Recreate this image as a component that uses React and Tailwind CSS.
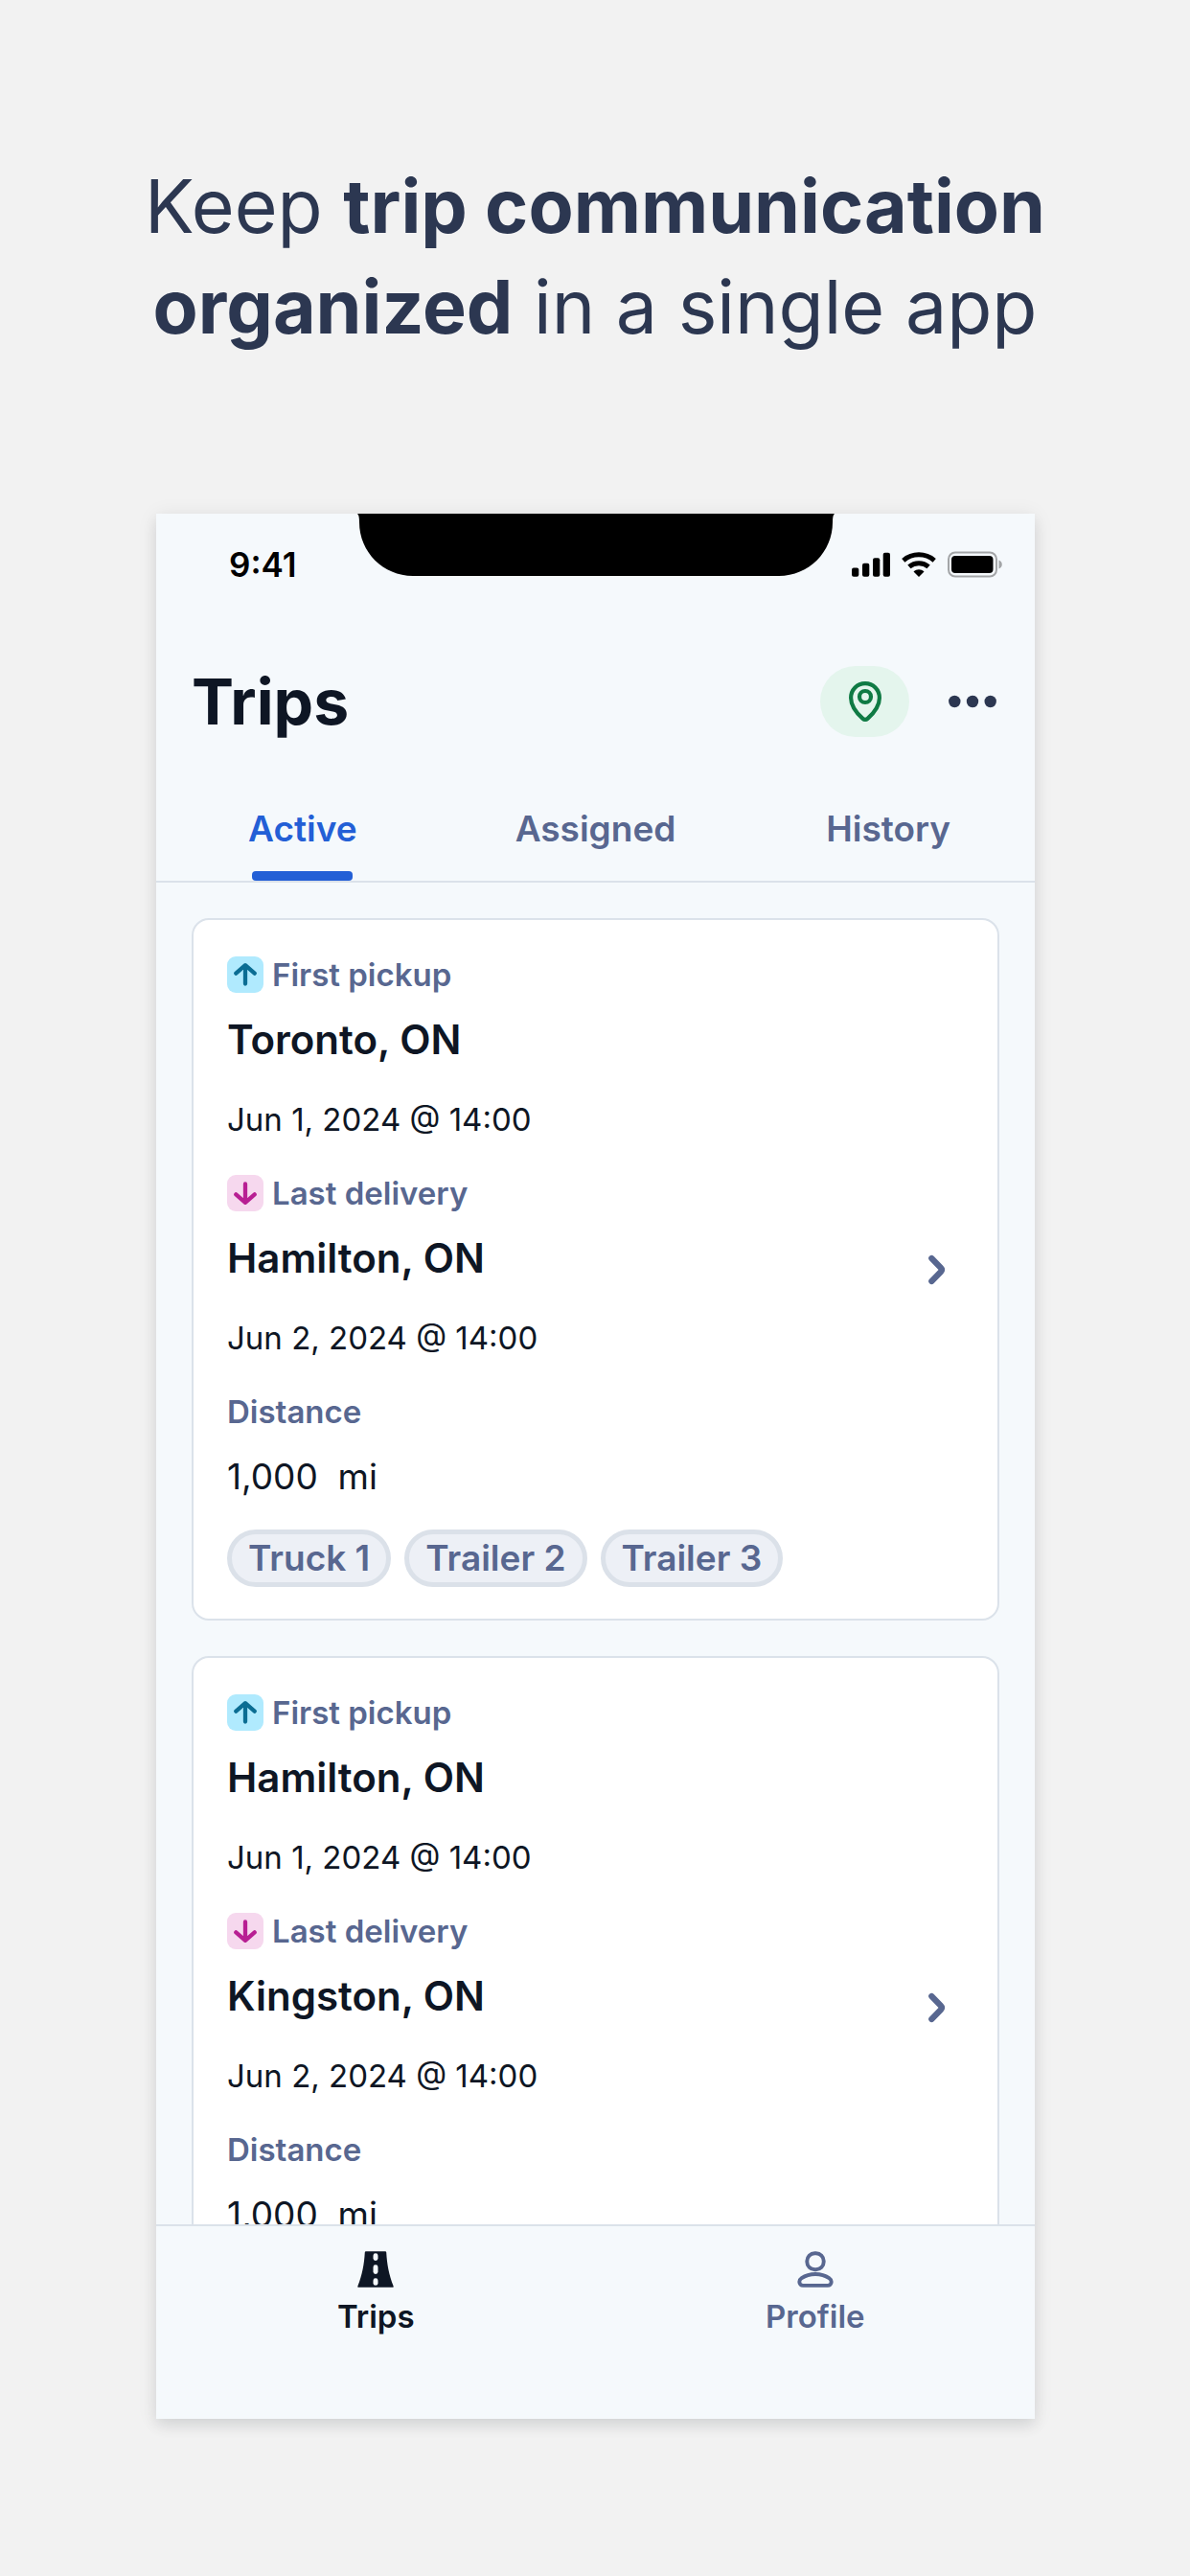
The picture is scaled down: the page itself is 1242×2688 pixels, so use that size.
import { useState } from 'react';

const TABS = ['Active', 'Assigned', 'History'];

const TRIPS = [
  {
    id: 't_1',
    pickup: { city: 'Toronto, ON', date: 'Jun 1, 2024 @ 14:00' },
    delivery: { city: 'Hamilton, ON', date: 'Jun 2, 2024 @ 14:00' },
    distance: '1,000',
    equipment: ['Truck 1', 'Trailer 2', 'Trailer 3'],
  },
  {
    id: 't_2',
    pickup: { city: 'Hamilton, ON', date: 'Jun 1, 2024 @ 14:00' },
    delivery: { city: 'Kingston, ON', date: 'Jun 2, 2024 @ 14:00' },
    distance: '1,000',
    equipment: ['Truck 1', 'Trailer 2', 'Trailer 3'],
  },
];

function Notch() {
  return (
    <svg
      className="absolute top-0 left-1/2 -translate-x-1/2"
      width="498"
      height="65"
      viewBox="0 0 498 65"
      aria-hidden="true"
    >
      <path d="M0 0c1.500 1 2 4 2 9c0 31 25 56 56 56h382c31 0 56-25 56-56c0-5 .5-8 2-9z" fill="#000" />
    </svg>
  );
}

function StatusBar() {
  return (
    <div className="relative flex h-[106px] items-center justify-between pl-[76px] pr-[34px]">
      <Notch />
      <span className="text-[35px] leading-[42px] font-semibold text-black">9:41</span>
      <div className="flex items-center gap-3">
        <svg width="40" height="26" viewBox="0 0 40 26" aria-hidden="true">
          <rect x="0" y="16.500" width="7.300" height="9.300" rx="2" />
          <rect x="11" y="11.800" width="7.300" height="14" rx="2" />
          <rect x="22" y="6.200" width="7.300" height="19.600" rx="2" />
          <rect x="32.700" y="0.800" width="7.300" height="25" rx="2" />
        </svg>
        <svg width="36" height="26" viewBox="0 0 36 26" fill="none" aria-hidden="true">
          <path d="M1.800 8.800a25 25 0 0 1 32.400 0" stroke="#000" strokeWidth="5" />
          <path d="M7.900 15.400a15.500 15.500 0 0 1 20.200 0" stroke="#000" strokeWidth="5" />
          <path d="M12.500 20.400c3.200-3 7.800-3 11 0L18 26z" fill="#000" />
        </svg>
        <svg width="57" height="28" viewBox="0 0 57 28" fill="none" aria-hidden="true">
          <rect x="1" y="1.500" width="50" height="25" rx="7" stroke="#a3a5a7" strokeWidth="2" />
          <rect x="4" y="5" width="43.500" height="18" rx="4" fill="#000" />
          <path d="M53.500 9.500c2 .8 3.300 2.500 3.300 4.500s-1.300 3.700-3.300 4.500z" fill="#a3a5a7" />
        </svg>
      </div>
    </div>
  );
}

function PinIcon() {
  return (
    <svg width="34" height="42" viewBox="0 0 34 42" fill="none" stroke="#0f7a44" strokeWidth="4.200" aria-hidden="true">
      <path d="M17 39.900c-.9 0-1.700-.3-2.500-1C8.500 33.500 2.100 25.500 2.100 17.200C2.100 8.700 8.600 2.100 17 2.100s14.900 6.600 14.900 15.100c0 8.300-6.400 16.300-12.400 21.700c-.8.7-1.600 1-2.500 1z" />
      <circle cx="17" cy="16" r="6" />
    </svg>
  );
}

function StopIcon({ type }) {
  const isPickup = type === 'pickup';

  return (
    <span
      className={`flex size-[38px] items-center justify-center rounded-[9px] ${
        isPickup ? 'bg-[#b0eafe] text-[#0b6d93]' : 'bg-[#f6d8ee] text-[#b81f93]'
      }`}
    >
      <svg
        width="38"
        height="38"
        viewBox="0 0 38 38"
        fill="none"
        stroke="currentColor"
        strokeWidth="4.300"
        strokeLinecap="round"
        strokeLinejoin="round"
        aria-hidden="true"
      >
        {isPickup ? (
          <path d="M19 28.500V9.500M9.300 17.600L19 9.200l9.700 8.400" />
        ) : (
          <path d="M19 9.500v19M9.300 20.400l9.700 8.400 9.700-8.400" />
        )}
      </svg>
    </span>
  );
}

function Stop({ type, label, stop }) {
  return (
    <div className="mb-[33px]">
      <div className="flex h-[38px] items-center gap-[9px]">
        <StopIcon type={type} />
        <span className="text-[33px] leading-[38px] font-semibold text-[#586790]">{label}</span>
      </div>
      <h2 className="mt-[19px] text-[42px] leading-[60px] font-semibold">{stop.city}</h2>
      <p className="mt-7 text-[33px] leading-[50px]">{stop.date}</p>
    </div>
  );
}

function TripCard({ trip }) {
  return (
    <article className="flex shrink-0 items-center justify-between rounded-[18px] border-2 border-[#dbe2ea] bg-white pr-[53px] pl-[35px] text-[#0e1624]">
      <div className="pt-[38px] pb-[33px]">
        <Stop type="pickup" label="First pickup" stop={trip.pickup} />
        <Stop type="delivery" label="Last delivery" stop={trip.delivery} />
        <p className="text-[33px] leading-[38px] font-semibold text-[#586790]">Distance</p>
        <p className="mt-[19px] text-[37px] leading-[60px]">{trip.distance}&nbsp; mi</p>
        <ul className="mt-[25px] flex gap-[14px]">
          {trip.equipment.map((name) => (
            <li
              key={name}
              className="rounded-full border-5 border-[#dbe1e9] bg-[#edf0f6] px-[17px] text-[37px] leading-[50px] font-semibold text-[#586790]"
            >
              {name}
            </li>
          ))}
        </ul>
      </div>
      <button type="button" aria-label="Open trip">
        <svg
          width="20"
          height="32"
          viewBox="0 0 20 32"
          fill="none"
          stroke="#586790"
          strokeWidth="6.200"
          strokeLinecap="round"
          strokeLinejoin="round"
          aria-hidden="true"
        >
          <path d="M4.300 4L14 14q1.900 2 0 4L4.300 28" />
        </svg>
      </button>
    </article>
  );
}

function RoadIcon() {
  return (
    <svg width="38" height="38" viewBox="0 0 38 38" aria-hidden="true">
      <path
        d="M8.800.3h20.400c.5 0 .9.300 1 .9c.8 13 2.600 22.800 7.400 35.200c.3.900 0 1.400-.9 1.400H1.300c-.9 0-1.200-.5-.9-1.400C5.200 24 7 14.200 7.800 1.200c.1-.6.500-.9 1-.9z"
        fill="#0e1624"
      />
      <rect x="16.500" y="2.300" width="5" height="7.700" rx="2.400" fill="#f5f9fc" />
      <rect x="16.500" y="14.300" width="5" height="9.700" rx="2.400" fill="#f5f9fc" />
      <rect x="16.500" y="28.300" width="5" height="7.500" rx="2.400" fill="#f5f9fc" />
    </svg>
  );
}

function PersonIcon() {
  return (
    <svg width="38" height="38" viewBox="0 0 38 38" fill="none" stroke="currentColor" strokeWidth="3.900" aria-hidden="true">
      <rect x="10.300" y="2.200" width="17.400" height="17" rx="8" />
      <path d="M19 24c-5.500 0-10.300 1.400-14.300 4.200C3.100 29.300 2.300 30.400 2.300 32c0 2.300 1.600 3.900 3.900 3.900h25.600c2.300 0 3.900-1.600 3.900-3.900c0-1.600-.8-2.700-2.400-3.800C29.300 25.400 24.500 24 19 24z" />
    </svg>
  );
}

export default function App() {
  const [activeTab, setActiveTab] = useState('Active');

  return (
    <div className="flex h-screen flex-col bg-[#f2f2f2] pt-[163px] pb-[164px] font-['Inter',sans-serif]">
      <h1 className="text-center text-[77px] leading-[105px] whitespace-nowrap text-[#2c3751]">
        Keep <strong className="font-bold">trip communication</strong>
        <br />
        <strong className="font-bold">organized</strong> in a single app
      </h1>

      <main className="mt-[163px] mr-[162px] ml-[163px] flex min-h-0 flex-1 flex-col bg-[#f5f9fc] shadow-[0_2px_20px_rgba(0,0,0,0.08),0_8px_14px_rgba(16,24,40,0.08)]">
        <StatusBar />

        <header className="mt-[53px] flex items-center pr-10 pl-[37px]">
          <h2 className="flex-1 text-[66px] leading-[74px] font-bold text-[#0e1624]">Trips</h2>
          <button
            type="button"
            aria-label="Location"
            className="flex h-[74px] w-[93px] items-center justify-center rounded-full bg-[#e4f5ed]"
          >
            <PinIcon />
          </button>
          <button type="button" aria-label="More options" className="ml-[41px]">
            <svg width="50" height="14" viewBox="0 0 50 14" fill="#2c3751" aria-hidden="true">
              <circle cx="6.300" cy="7" r="6.200" />
              <circle cx="25" cy="7" r="6.200" />
              <circle cx="43.700" cy="7" r="6.200" />
            </svg>
          </button>
        </header>

        <div role="tablist" className="mt-[66px] grid grid-cols-3 border-b-2 border-[#dbe2ea]">
          {TABS.map((tab) => (
            <button
              key={tab}
              type="button"
              role="tab"
              aria-selected={activeTab === tab}
              onClick={() => setActiveTab(tab)}
              className={`flex flex-col items-center gap-[14px] text-[37px] leading-[60px] font-semibold ${
                activeTab === tab ? 'text-[#235fd6]' : 'text-[#586790]'
              }`}
            >
              {tab}
              <span
                className={`h-[10px] w-[105px] rounded-[4px] ${
                  activeTab === tab ? 'bg-[#235fd6]' : 'bg-transparent'
                }`}
              />
            </button>
          ))}
        </div>

        <section className="flex min-h-0 flex-1 flex-col gap-[37px] overflow-hidden px-[37px] pt-[37px]">
          {TRIPS.map((trip) => (
            <TripCard key={trip.id} trip={trip} />
          ))}
        </section>

        <nav className="grid grid-cols-2 border-t-2 border-[#dbe2ea] pt-[26px] pb-[87px] text-[33px] leading-10 font-semibold">
          <a href="#trips" className="flex flex-col items-center gap-[10px] text-[#0e1624]">
            <RoadIcon />
            Trips
          </a>
          <a href="#profile" className="flex flex-col items-center gap-[10px] text-[#586790]">
            <PersonIcon />
            Profile
          </a>
        </nav>
      </main>
    </div>
  );
}
